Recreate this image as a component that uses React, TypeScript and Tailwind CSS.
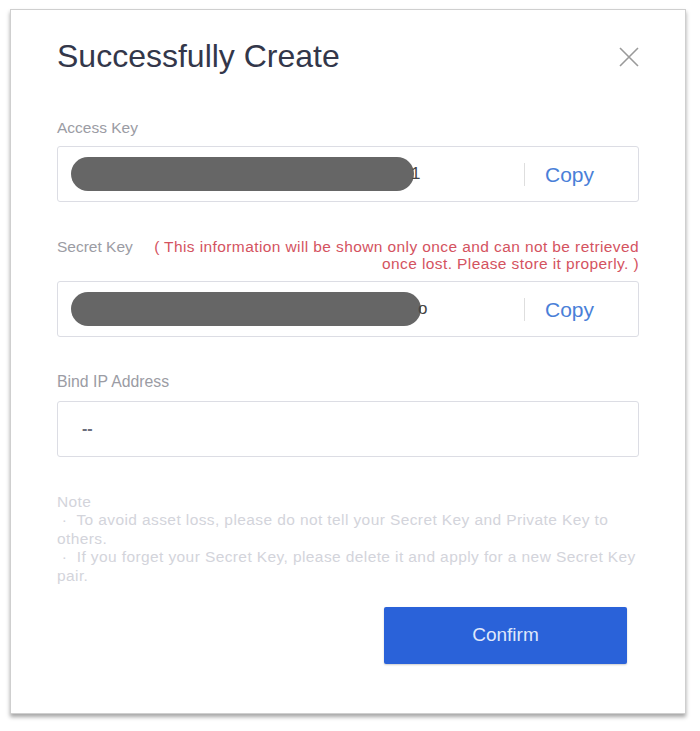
import React from "react";

function KeyInput({ tail, pillW }: { tail: string; pillW: string }) {
  return (
    <div className="flex h-[56px] items-center rounded-[3px] border border-[#dcdde4] pl-[13px] pr-[44px]">
      <div className="flex flex-1 items-center">
        <div className={`${pillW} h-[34px] rounded-full bg-[#666666]`} />
        <span className="-ml-[3px] text-[17px] text-[#444]">{tail}</span>
      </div>
      <div className="h-[23px] w-px bg-[#dedede]" />
      <span className="ml-[20px] text-[21px] leading-none text-[#4a7fd8]">Copy</span>
    </div>
  );
}

export default function App() {
  return (
    <div
      className="min-h-[731px] bg-white pl-[10px] pt-[9px]"
      style={{ fontFamily: '"Liberation Sans", Arial, sans-serif' }}
    >
      <div className="flex h-[705px] w-[676px] flex-col border border-[#cfcfcf] bg-white px-[46px] pt-[26px] shadow-[0_3px_4px_rgba(0,0,0,0.35)]">
        <div className="flex h-[40px] items-center justify-between">
          <h1 className="text-[32px] font-normal leading-[40px] text-[#33374a]">Successfully Create</h1>
          <svg width="20" height="20" viewBox="0 0 20 20" className="mt-[1px]">
            <path d="M1 1 L19 19 M19 1 L1 19" stroke="#9a9a9a" strokeWidth="1.6" fill="none" />
          </svg>
        </div>

        <div className="mt-[42px] text-[15.5px] leading-[20px] text-[#9b9ca4]">Access Key</div>
        <div className="mt-[8px]">
          <KeyInput tail="1" pillW="w-[343px]" />
        </div>

        <div className="mt-[36px] flex items-start justify-between">
          <span className="text-[15.5px] leading-[17px] text-[#9b9ca4]">Secret Key</span>
          <span className="text-right text-[15.5px] leading-[17px] tracking-[0.4px] text-[#d4535f]">
            ( This information will be shown only once and can not be retrieved
            <br />
            once lost. Please store it properly. )
          </span>
        </div>
        <div className="mt-[9px]">
          <KeyInput tail="o" pillW="w-[350px]" />
        </div>

        <div className="mt-[35px] text-[15.8px] leading-[20px] text-[#9b9ca4]">Bind IP Address</div>
        <div className="mt-[9px] flex h-[56px] items-center rounded-[3px] border border-[#dcdde4] pl-[24px]">
          <span className="text-[16px] font-bold text-[#6b6e7c]">--</span>
        </div>

        <div className="mt-[36px] text-[15.5px] leading-[18.4px] tracking-[0.4px] text-[#d3d4db]">
          <div>Note</div>
          <div>&nbsp;·&nbsp; To avoid asset loss, please do not tell your Secret Key and Private Key to others.</div>
          <div>&nbsp;·&nbsp; If you forget your Secret Key, please delete it and apply for a new Secret Key pair.</div>
        </div>

        <div className="mt-[22px] flex justify-end pr-[12px]">
          <button className="flex h-[57px] w-[243px] items-center justify-center rounded-[2px] bg-[#2a62d9] text-[19px] text-[#dfe7fb] shadow-[0_1px_2px_rgba(0,0,0,0.2)]">
            Confirm
          </button>
        </div>
      </div>
    </div>
  );
}
